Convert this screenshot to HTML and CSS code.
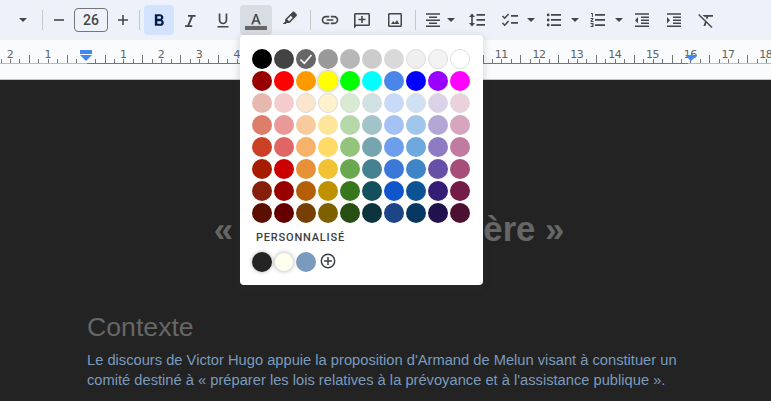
FILE: index.html
```html
<!DOCTYPE html>
<html lang="fr">
<head>
<meta charset="utf-8">
<title>Document</title>
<link rel="stylesheet" href="styles.css">
</head>
<body>
<header class="toolbar">
  <svg class="caret" viewBox="0 0 8 4"><path d="M0 0h8L4 4z"/></svg>
  <i class="sep"></i>
  <svg class="icon" viewBox="0 0 20 20"><path d="M5 9.200h10v1.600H5z"/></svg>
  <div class="size">26</div>
  <svg class="icon" viewBox="0 0 20 20"><path d="M5 9.200h4.200V5h1.600v4.200H15v1.600h-4.200V15H9.200v-4.200H5z"/></svg>
  <i class="sep"></i>
  <button class="btn bold"><svg class="icon" viewBox="0 0 24 24"><path d="M15.6 11.790c.97-.67 1.650-1.770 1.650-2.790 0-2.260-1.750-4-4-4H7v14h7.040c2.090 0 3.710-1.700 3.710-3.790 0-1.520-.86-2.820-2.150-3.420zM10 7.500h3c.83 0 1.500.67 1.500 1.500s-.67 1.500-1.500 1.500h-3v-3zm3.500 9H10v-3h3.500c.83 0 1.500.67 1.500 1.500s-.67 1.500-1.500 1.500z"/></svg></button>
  <svg class="icon18 italic" viewBox="0 0 18 18"><path d="M7 3v1.800h2.900L6.300 13.200H4V15h7.200v-1.800H8.400L12 4.800h2.600V3z"/></svg>
  <svg class="icon18" viewBox="0 0 18 18"><path d="M9 13.300c2.500 0 4.300-1.900 4.300-4.300V2.500H11.600V9c0 1.600-1.100 2.700-2.600 2.700S6.400 10.600 6.400 9V2.500H4.700V9c0 2.400 1.800 4.300 4.300 4.300zM3.500 15h11v1.500h-11z"/></svg>
  <button class="btn color"><svg class="lettera" viewBox="0 0 22 20"><path d="M10.100 2 6.200 12.500h1.800l1-2.700h4l1 2.700h1.800L11.900 2zm-.6 6.300L11 4.100l1.500 4.200z"/><path class="bar" d="M0 14h22v4H0z"/></svg></button>
  <svg class="icon18 pen" viewBox="0 0 18 18"><path fill-rule="evenodd" d="M11.500 2c.6-.6 1.400-.6 2 0l2 2c.6.600.6 1.400 0 2l-7 7H5.600L4.700 14H1.700l2.500-2.600V9.200zM9.800 5.800 6.200 9.400l1.900 1.900 3.600-3.600z"/></svg>
  <i class="sep"></i>
  <svg class="icon" viewBox="0 0 24 24"><path d="M3.900 12c0-1.710 1.390-3.100 3.100-3.100h4V7H7c-2.760 0-5 2.240-5 5s2.240 5 5 5h4v-1.900H7c-1.710 0-3.100-1.390-3.100-3.100zM8 13h8v-2H8v2zm9-6h-4v1.900h4c1.710 0 3.100 1.390 3.100 3.100s-1.390 3.100-3.100 3.100h-4V17h4c2.760 0 5-2.240 5-5s-2.240-5-5-5z"/></svg>
  <svg class="icon comment" viewBox="0 0 20 20"><path d="M2 18.500V4.500C2 3.700 2.700 3 3.500 3h13c.8 0 1.500.7 1.500 1.500v10c0 .8-.7 1.500-1.500 1.500H4.500zM3.600 4.600v10.100l.3-.3h12.500V4.600zM9.200 6h1.600v2.700h2.700v1.600h-2.700V13H9.200v-2.700H6.500V8.700h2.700z"/></svg>
  <svg class="icon18" viewBox="0 0 18 18"><path d="M14.500 3.500v11h-11v-11h11m0-1.500h-11C2.700 2 2 2.700 2 3.500v11c0 .8.700 1.500 1.500 1.500h11c.8 0 1.500-.7 1.500-1.500v-11c0-.8-.7-1.500-1.500-1.500zM11 9l-2.100 2.900L7.300 10 5 13h8.200z"/></svg>
  <i class="sep"></i>
  <svg class="icon18" viewBox="0 0 18 18"><path d="M2 2.300h14v1.500H2zM5 5.400h8v1.500H5zM2 8.400h14v1.500H2zM5 11.400h8v1.500H5zM2 14.500h14V16H2z"/></svg>
  <svg class="caret" viewBox="0 0 8 4"><path d="M0 0h8L4 4z"/></svg>
  <svg class="icon18" viewBox="0 0 18 18"><path d="M4 2.500 7 6H4.800v6H7l-3 3.500L1 12h2.200V6H1zM8.500 3h8.500v1.700H8.500zM8.500 8h8.500v1.700H8.500zM8.500 13h8.500v1.700H8.500z"/></svg>
  <svg class="icon18" viewBox="0 0 18 18"><path d="M10 4h7v1.700h-7zM10 11h7v1.700h-7z"/><path class="line" d="m1.500 5 2.200 2.200L7.600 3M1.500 12l2.200 2.200L7.600 10"/></svg>
  <svg class="caret" viewBox="0 0 8 4"><path d="M0 0h8L4 4z"/></svg>
  <svg class="icon18" viewBox="0 0 18 18"><path d="M6 3h10v1.700H6zM6 8.100h10v1.700H6zM6 13.200h10v1.700H6z"/><circle cx="3.200" cy="3.900" r="1.400"/><circle cx="3.200" cy="9" r="1.400"/><circle cx="3.200" cy="14" r="1.400"/></svg>
  <svg class="caret" viewBox="0 0 8 4"><path d="M0 0h8L4 4z"/></svg>
  <svg class="icon18" viewBox="0 0 18 18"><path d="M6 3h10v1.700H6zM6 8.100h10v1.700H6zM6 13.200h10v1.700H6zM2 2h1.900v4H2.900V3H2zM1.500 7h3v.9L2.800 10h1.700v1h-3v-.9L3.200 8H1.500zM1.500 12h3v4h-3v-.9h2v-.6h-1v-.9h1v-.6h-2z"/></svg>
  <svg class="caret" viewBox="0 0 8 4"><path d="M0 0h8L4 4z"/></svg>
  <svg class="icon18" viewBox="0 0 18 18"><path d="M2 2.300h14v1.500H2zM8 5.400h8v1.500H8zM8 8.400h8v1.500H8zM8 11.400h8v1.500H8zM2 14.500h14V16H2zM5 6v6.400L2 9.200z"/></svg>
  <svg class="icon18" viewBox="0 0 18 18"><path d="M2 2.300h14v1.500H2zM8 5.400h8v1.500H8zM8 8.400h8v1.500H8zM8 11.400h8v1.500H8zM2 14.500h14V16H2zM2 6v6.400l3-3.200z"/></svg>
  <svg class="icon18 clear" viewBox="0 0 18 18"><path d="M5.500 3H16v1.700h-4.800l-1 2.700-1.300-1.300.5-1.400H7.200zM2.100 1.900 1.100 2.900l6.900 6.800L6.400 14h1.900l1.100-3 5.100 5.100 1-1z"/></svg>
</header>

<div class="ruler">
  <div class="labels">
    <span>2</span><span>1</span><span></span><span>1</span><span>2</span><span>3</span><span>4</span><span>5</span><span>6</span><span>7</span><span>8</span><span>9</span><span>10</span><span>11</span><span>12</span><span>13</span><span>14</span><span>15</span><span>16</span><span>17</span><span>18</span>
  </div>
  <svg class="ticks" width="771" height="40" shape-rendering="crispEdges"></svg>
</div>

<main class="page">
  <h1>« Détruire la misère »</h1>
  <h2>Contexte</h2>
  <p>Le discours de Victor Hugo appuie la proposition d'Armand de Melun visant à constituer un<br>comité destiné à « préparer les lois relatives à la prévoyance et à l'assistance publique ».</p>
</main>

<aside class="picker">
  <div class="swatches" id="palette"></div>
  <div class="caption">PERSONNALISÉ</div>
  <div class="swatches custom">
    <span class="swatch ink"></span><span class="swatch cream"></span><span class="swatch blue"></span>
    <svg class="add" viewBox="0 0 16 16"><circle cx="8" cy="8" r="6.700"/><path d="M8 4v8M4 8h8"/></svg>
  </div>
</aside>
<script src="app.js"></script>
</body>
</html>
```
FILE: styles.css
```css
* { box-sizing: border-box; }
body { margin: 0; width: 771px; height: 401px; overflow: hidden; position: relative; background: #232323; font-family: "Liberation Sans", Arial, sans-serif; }

.toolbar {
  height: 40px; padding-left: 10px; background: #edf2fa;
  display: grid; align-items: center; justify-items: center;
  grid-template-columns: 26px 12px 22px 42px 22px 10px 30px 32px 33px 34px 34px 7px 32px 32px 34px 7px 28px 8px 44px 22px 20px 26px 16px 30px 12px 34px 30px 34px;
}
.toolbar svg { display: block; fill: #444746; }
.icon { width: 20px; height: 20px; }
.icon18 { width: 18px; height: 18px; }
.caret { width: 8px; height: 4px; }
.sep { width: 1px; height: 20px; background: #c7c7c7; }
.size { width: 34px; height: 24px; border: 1px solid #747775; border-radius: 4px; font: 500 14px/22px Roboto, sans-serif; text-align: center; color: #444746; }
.btn { width: 30px; height: 30px; border: 0; padding: 0; border-radius: 4px; display: grid; place-items: center; }
.bold { background: #d3e3fd; }
.toolbar .bold svg { fill: #041e49; }
.italic { margin-top: 2px; }
.clear { margin-top: 2px; }
.color { width: 32px; background: #d8dce3; }
.lettera { width: 22px; height: 20px; margin-top: 4px; }
.toolbar .bar { fill: #666; }
.pen { margin-bottom: 2px; }
.toolbar .line { fill: none; stroke: #444746; stroke-width: 1.6; }

.ruler { position: relative; height: 40px; background: #f9fbfd; border-bottom: 1px solid #c4c7c5; overflow: hidden; }
.labels { display: flex; margin-left: -9px; padding-top: 8px; }
.labels span { flex: 0 0 37.8px; height: 13px; text-align: center; font: 11px/13px "DejaVu Sans", sans-serif; letter-spacing: -.5px; color: #5f6368; }
.ticks { position: absolute; inset: 0; }
.tick { stroke: #747775; }
.out { stroke: #b9bcbf; }
.marker { fill: #4285f4; shape-rendering: auto; }

.page { width: 604px; margin-left: 87px; padding-top: 129px; }
h1 { margin: 0; font-size: 34.67px; line-height: 40px; text-align: center; color: #666; }
h2 { margin: 62px 0 0; font-size: 26.67px; line-height: 32px; font-weight: 400; color: #666; }
p { margin: 7px 0 0; font-size: 14.69px; line-height: 20px; color: #7a9bbd; white-space: nowrap; }

.picker { position: absolute; left: 240px; top: 35px; width: 243px; height: 250px; padding: 14px 12px; background: #fff; border-radius: 4px; box-shadow: 0 2px 6px 2px rgba(60,64,67,.15); }
.swatches { display: grid; grid-template-columns: repeat(10, 20px); gap: 2px; }
.swatch { width: 20px; height: 20px; border-radius: 50%; display: block; }
.rim { border: 1px solid #ddd; }
.glow { box-shadow: 0 0 4px rgba(0,0,0,.35); }
.check { display: block; fill: none; stroke: #fff; stroke-width: 1.5; }
.caption { height: 28px; padding: 1px 0 0 4px; font: 500 11px/28px Roboto, sans-serif; letter-spacing: .8px; color: #3c4043; }
.ink { background: #232323; box-shadow: 0 0 4px rgba(60,64,67,.4); }
.cream { background: #fffff0; border: 1px solid #ddd; box-shadow: 0 0 4px rgba(60,64,67,.3); }
.blue { background: #7a9bbd; }
.custom { padding-top: 1px; }
.add { width: 16px; height: 16px; margin: 1px 0 0 2px; fill: none; stroke: #3c4043; stroke-width: 1.5; }
```
FILE: app.js
```js
const rows = [
  '000000 434343 666666 999999 b7b7b7 cccccc d9d9d9 efefef f3f3f3 ffffff',
  '980000 ff0000 ff9900 ffff00 00ff00 00ffff 4a86e8 0000ff 9900ff ff00ff',
  'e6b8af f4cccc fce5cd fff2cc d9ead3 d0e0e3 c9daf8 cfe2f3 d9d2e9 ead1dc',
  'dd7e6b ea9999 f9cb9c ffe599 b6d7a8 a2c4c9 a4c2f4 9fc5e8 b4a7d6 d5a6bd',
  'cc4125 e06666 f6b26b ffd966 93c47d 76a5af 6d9eeb 6fa8dc 8e7cc3 c27ba0',
  'a61c00 cc0000 e69138 f1c232 6aa84f 45818e 3c78d8 3d85c6 674ea7 a64d79',
  '85200c 990000 b45f06 bf9000 38761d 134f5c 1155cc 0b5394 351c75 741b47',
  '5b0f00 660000 783f04 7f6000 274e13 0c343d 1c4587 073763 20124d 4c1130'
];
const rimmed = ['efefef', 'f3f3f3', 'ffffff', 'fce5cd', 'fff2cc', 'd9ead3', 'd0e0e3', 'cfe2f3', 'd9d2e9', 'ead1dc'];
document.getElementById('palette').innerHTML = rows.join(' ').split(' ').map(c => {
  const cls = 'swatch' + (rimmed.includes(c) ? ' rim' : '') + (c === 'ffff00' ? ' glow' : '');
  const mark = c === '666666' ? '<svg class="check" viewBox="0 0 20 20"><path d="m4.500 10.500 3.800 3.800L15.500 6"/></svg>' : '';
  return `<span class="${cls}" style="background:#${c}">${mark}</span>`;
}).join('');

// Quarter-centimetre ticks, the taller ones at each half
const origin = 86.1, cm = 37.8;
let marks = '';
for (let q = -9; q <= 72; q++) {
  if (q === 0) continue;
  const x = Math.floor(origin + q * cm / 4) + 0.5;
  const top = Math.abs(q) % 4 === 2 ? 15 : 19;
  marks += `<path class="tick" d="M${x} ${top}V23"/>`;
}
document.querySelector('.ticks').innerHTML = marks +
  '<path class="out" d="M0 23.500H87M688 23.500H771"/><path class="tick" d="M87 23.500H688"/>' +
  '<path class="marker" d="M80 10h12v4H80zM80 15h12l-6 6zM685 15h12l-6 6z"/>';
```
